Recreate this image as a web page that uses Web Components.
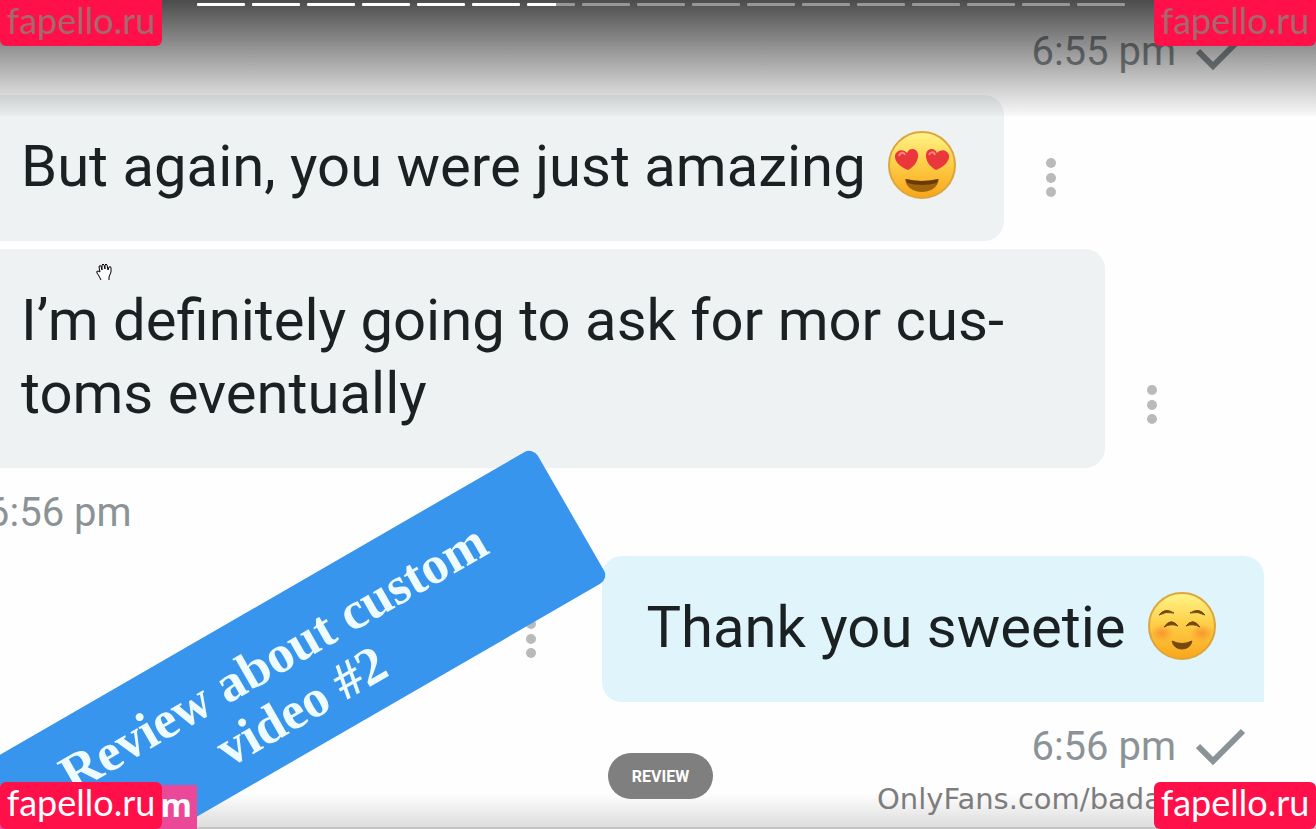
<!DOCTYPE html>
<html lang="en">
<head>
<meta charset="utf-8">
<meta name="viewport" content="width=device-width, initial-scale=1">
<title>Review</title>
<style>
  html, body {
    margin: 0;
    height: 100%;
    overflow: hidden;
    background: #fefefe;
    font-family: Roboto, "Liberation Sans", sans-serif;
  }
</style>
</head>
<body>
<story-viewer>
  <chat-thread>
    <chat-time side="right" check>6:55 pm</chat-time>
    <chat-message>But again, you were just amazing <emoji-face name="love"></emoji-face></chat-message>
    <chat-message wide>I’m definitely going to ask for mor cus-<br>toms eventually</chat-message>
    <chat-time side="left">6:56 pm</chat-time>
    <chat-message side="right">Thank you sweetie <emoji-face name="smile"></emoji-face></chat-message>
    <chat-time side="right" check>6:56 pm</chat-time>
  </chat-thread>
  <story-ribbon slot="over">Review about custom<br>video #2</story-ribbon>
  <hand-cursor slot="over"></hand-cursor>
  <story-progress slot="controls" total="17" current="6"></story-progress>
  <story-pill slot="controls">REVIEW</story-pill>
  <owner-mark slot="marks">OnlyFans.com/bada</owner-mark>
  <pink-mark slot="marks">m</pink-mark>
  <site-mark slot="marks" place="top left">fapello.ru</site-mark>
  <site-mark slot="marks" place="top right">fapello.ru</site-mark>
  <site-mark slot="marks" place="bottom left">fapello.ru</site-mark>
  <site-mark slot="marks" place="bottom right">fapello.ru</site-mark>
</story-viewer>

<script>
class BaseElement extends HTMLElement {
  constructor() {
    super();
    this.attachShadow({ mode: 'open' });
  }

  connectedCallback() {
    this.shadowRoot.innerHTML = this.render();
  }
}

class StoryViewer extends BaseElement {
  render() {
    return `
      <style>
        :host {
          display: block;
          position: relative;
          height: 100%;
          overflow: hidden;
        }
        .shade {
          position: absolute;
          left: 0;
          right: 0;
          pointer-events: none;
        }
        .shade.top {
          top: 0;
          height: 116px;
          background: linear-gradient(rgba(0, 0, 0, 0.7), rgba(0, 0, 0, 0.02));
        }
        .shade.bottom {
          bottom: 0;
          height: 36px;
          box-sizing: border-box;
          border-bottom: 2px solid #c4c4c2;
          background: linear-gradient(rgba(0, 0, 0, 0), rgba(0, 0, 0, 0.13));
        }
        .controls {
          position: absolute;
          inset: 0 0 0 5px;
          display: flex;
          flex-direction: column;
          justify-content: space-between;
          align-items: center;
          padding: 3px 0 30px;
        }
      </style>
      <slot></slot>
      <div class="shade bottom"></div>
      <slot name="over"></slot>
      <div class="shade top"></div>
      <div class="controls"><slot name="controls"></slot></div>
      <slot name="marks"></slot>
    `;
  }
}

class ChatThread extends BaseElement {
  render() {
    return `
      <style>
        :host {
          display: flex;
          flex-direction: column;
          gap: 8px;
          padding-top: 15px;
        }
      </style>
      <slot></slot>
    `;
  }
}

class ChatMessage extends BaseElement {
  render() {
    return `
      <style>
        :host {
          display: flex;
          align-items: flex-end;
          gap: 32px;
          font-size: 58px;
          line-height: 73px;
          color: #1b2123;
        }
        .bubble {
          box-sizing: border-box;
          padding: 35px 48px 38px 21px;
          border-radius: 0 20px 20px 0;
          background: #eef2f3;
          white-space: nowrap;
        }
        :host([wide]) .bubble {
          width: 84%;
        }
        :host([side="right"]) {
          flex-direction: row-reverse;
          gap: 56px;
          padding-right: 52px;
        }
        :host([side="right"]) .bubble {
          padding-left: 44px;
          border-radius: 20px 20px 0 20px;
          background: #dff4fb;
        }
        button {
          display: flex;
          width: 30px;
          padding: 0;
          margin-bottom: 42px;
          justify-content: center;
          border: 0;
          background: none;
        }
      </style>
      <div class="bubble"><slot></slot></div>
      <button aria-label="Message options">
        <svg width="12" height="42" viewBox="0 0 12 42" fill="#b9bbbb">
          <circle cx="6" cy="6" r="5"/>
          <circle cx="6" cy="21" r="5"/>
          <circle cx="6" cy="35" r="5"/>
        </svg>
      </button>
    `;
  }
}

class ChatTime extends BaseElement {
  render() {
    const check = `
      <svg width="50" height="38" viewBox="0 0 50 38" fill="none" stroke="#8b9396" stroke-width="6">
        <path d="M2 18 L17 33 L47 3"/>
      </svg>`;
    return `
      <style>
        :host {
          display: flex;
          align-items: center;
          gap: 20px;
          height: 70px;
          padding-top: 2px;
          font-size: 40px;
          line-height: 70px;
          color: #8b9396;
        }
        :host([side="right"]) {
          justify-content: flex-end;
          padding-right: 70px;
        }
        :host([side="left"]) {
          margin-left: -13px;
        }
      </style>
      <span><slot></slot></span>
      ${this.hasAttribute('check') ? check : ''}
    `;
  }
}

class EmojiFace extends BaseElement {
  render() {
    const faces = {
      love: `
        <path d="M20 39 C12 36 6 30 7 24 C9 18 16 18 19 22 C21 16 29 17 30 23 C31 29 26 36 20 39Z" fill="#e9373b"/>
        <path d="M48 39 C42 36 37 29 38 23 C39 17 47 16 49 22 C52 18 59 18 61 24 C62 30 56 36 48 39Z" fill="#e9373b"/>
        <path d="M11 25 C12 21 16 21 17 24 M41 24 C42 21 46 20 47 24" stroke="#ff8580" stroke-width="2" fill="none"/>
        <path d="M17 48 Q34 52 51 48 C50 56 43 61 34 61 C25 61 18 56 17 48Z" fill="#a0640c"/>
        <path d="M18 48 Q34 52 50 48 L49 52 Q34 56 19 52Z" fill="#6b3a0a"/>`,
      smile: `
        <ellipse cx="14" cy="41" rx="12" ry="9" fill="url(#blush)"/>
        <ellipse cx="54" cy="41" rx="12" ry="9" fill="url(#blush)"/>
        <path d="M11 23 Q17 15 26 21 Q18 19 11 23Z M42 21 Q51 15 57 23 Q50 19 42 21Z M16 35 Q23 25 30 34 Q23 31 16 35Z M38 34 Q45 25 52 35 Q45 31 38 34Z M24 49 Q34 54 44 49 Q42 57 34 57 Q26 57 24 49Z"
          fill="#75480f" stroke="#75480f" stroke-linejoin="round"/>`
    };
    return `
      <style>
        :host {
          display: inline-block;
          width: 68px;
          height: 68px;
          margin-left: 8px;
          vertical-align: -13px;
          line-height: 0;
        }
      </style>
      <svg width="68" height="68" viewBox="0 0 68 68">
        <defs>
          <linearGradient id="skin" x1="0" y1="0" x2="0" y2="1">
            <stop offset="0" stop-color="#fff58a"/>
            <stop offset="0.45" stop-color="#fed04a"/>
            <stop offset="1" stop-color="#f9a51a"/>
          </linearGradient>
          <radialGradient id="blush">
            <stop offset="0" stop-color="#f57b25" stop-opacity="0.6"/>
            <stop offset="1" stop-color="#f57b25" stop-opacity="0"/>
          </radialGradient>
        </defs>
        <circle cx="34" cy="34" r="33" fill="url(#skin)" stroke="#dda63c" stroke-width="2"/>
        ${faces[this.getAttribute('name')]}
      </svg>
    `;
  }
}

class StoryRibbon extends BaseElement {
  render() {
    return `
      <style>
        :host {
          position: absolute;
          left: -30px;
          top: 598px;
          display: flex;
          align-items: center;
          justify-content: center;
          width: 644px;
          height: 152px;
          border-radius: 10px;
          background: #3895ee;
          color: #effcff;
          font: bold 53px/56px "Liberation Serif", serif;
          text-align: center;
          transform: rotate(-30deg);
        }
        div {
          padding: 8px 16px 0 0;
        }
      </style>
      <div><slot></slot></div>
    `;
  }
}

class HandCursor extends BaseElement {
  render() {
    return `
      <style>
        :host {
          position: absolute;
          left: 96px;
          top: 263px;
          line-height: 0;
        }
      </style>
      <svg width="17" height="18" viewBox="0 0 17 18" fill="#fff" stroke="#000" stroke-width="1">
        <path d="M5 17 L3 13 L1 10 Q0 8 2 8 L4 9 L3 4 Q3 2 5 3 L6 7 L6 2 Q7 0 8 2 L9 6 L9 2 Q10 0 11 2 L12 7 L13 4 Q15 3 15 5 L15 9 L13 14 L13 17"/>
      </svg>
    `;
  }
}

class StoryProgress extends BaseElement {
  render() {
    const total = Number(this.getAttribute('total'));
    const current = Number(this.getAttribute('current'));
    const bars = Array.from({ length: total }, (_, i) => {
      const state = i < current ? 'done' : i === current ? 'playing' : '';
      return `<i class="${state}"></i>`;
    }).join('');
    return `
      <style>
        :host {
          display: flex;
          gap: 7px;
          width: 71%;
          max-width: 928px;
        }
        i {
          flex: 1;
          height: 3px;
          border-radius: 1px;
          background: rgba(255, 255, 255, 0.4);
        }
        .done {
          background: #fff;
        }
        .playing {
          background: linear-gradient(90deg, #fff 60%, rgba(255, 255, 255, 0.4) 60%);
        }
      </style>
      ${bars}
    `;
  }
}

class StoryPill extends BaseElement {
  render() {
    return `
      <style>
        button {
          display: block;
          height: 46px;
          padding: 2px 24px 0;
          border: 0;
          border-radius: 23px;
          background: #7f7f7f;
          color: #fff;
          font: bold 16px/44px Roboto, "Liberation Sans", sans-serif;
        }
      </style>
      <button><slot></slot></button>
    `;
  }
}

class OwnerMark extends BaseElement {
  render() {
    return `
      <style>
        :host {
          position: absolute;
          right: 154px;
          bottom: 12px;
          color: #7d7d7d;
          font: 29px/36px "DejaVu Sans", sans-serif;
        }
      </style>
      <slot></slot>
    `;
  }
}

class PinkMark extends BaseElement {
  render() {
    return `
      <style>
        :host {
          position: absolute;
          left: 0;
          bottom: 0;
          width: 192px;
          padding: 0 5px 4px 0;
          background: #ec4899;
          color: #fff;
          font: bold 32px/40px "Open Sans", sans-serif;
          text-align: right;
        }
      </style>
      <slot></slot>
    `;
  }
}

class SiteMark extends BaseElement {
  render() {
    return `
      <style>
        :host {
          position: absolute;
          width: 162px;
          background: #ff1048;
          color: #fff;
          font: 36px/40px Lato, sans-serif;
          text-align: center;
          white-space: nowrap;
        }
        :host([place~="top"]) {
          top: 0;
          padding-bottom: 6px;
          color: #a6686f;
          border-radius: 0 0 6px 6px;
        }
        :host([place~="bottom"]) {
          bottom: 0;
          padding-bottom: 7px;
          border-radius: 6px;
        }
        :host([place~="left"]) {
          left: 0;
        }
        :host([place~="right"]) {
          right: 0;
        }
      </style>
      <slot></slot>
    `;
  }
}

customElements.define('story-viewer', StoryViewer);
customElements.define('chat-thread', ChatThread);
customElements.define('chat-message', ChatMessage);
customElements.define('chat-time', ChatTime);
customElements.define('emoji-face', EmojiFace);
customElements.define('story-ribbon', StoryRibbon);
customElements.define('hand-cursor', HandCursor);
customElements.define('story-progress', StoryProgress);
customElements.define('story-pill', StoryPill);
customElements.define('owner-mark', OwnerMark);
customElements.define('pink-mark', PinkMark);
customElements.define('site-mark', SiteMark);
</script>
</body>
</html>
